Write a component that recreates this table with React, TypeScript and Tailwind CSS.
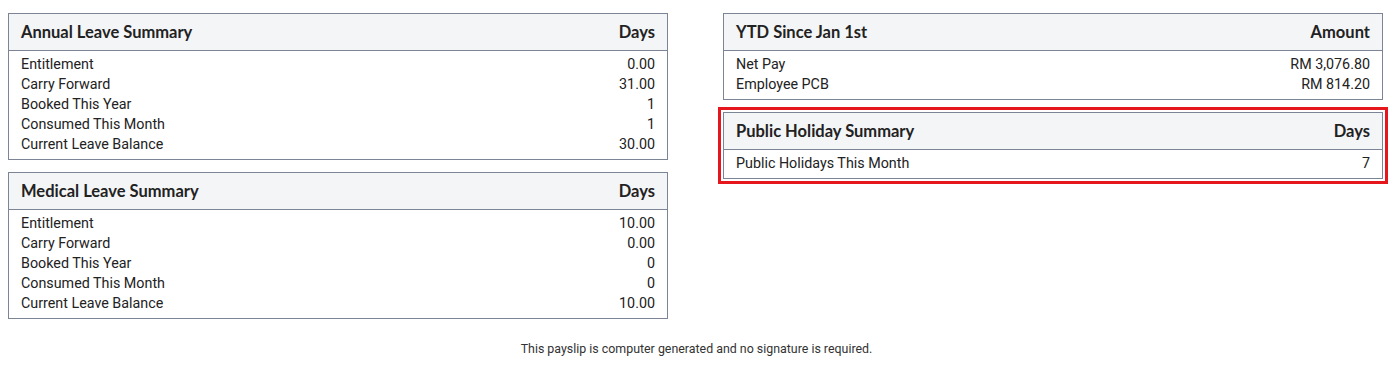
import React from "react";

type Row = [string, string];

function Summary({ title, unit, rows }: { title: string; unit: string; rows: Row[] }) {
  return (
    <div className="w-[660px] border border-[#7b8595] bg-white">
      <div className="flex h-[37px] items-center justify-between border-b border-[#7b8595] bg-[#f4f5f7] px-3 font-['Lato'] text-[16.5px] font-bold text-[#222]">
        <span>{title}</span>
        <span>{unit}</span>
      </div>
      <div className="px-3 pt-[3px] pb-[5px] font-['Roboto'] text-[14.3px] leading-[20px] text-[#222]">
        {rows.map(([k, v]) => (
          <div key={k} className="flex justify-between">
            <span>{k}</span>
            <span>{v}</span>
          </div>
        ))}
      </div>
    </div>
  );
}

export default function App() {
  return (
    <div className="w-[1393px] h-[368px] bg-white pt-[13px] font-['Roboto',sans-serif]">
      <div className="flex">
        <div className="ml-[8px] flex flex-col gap-3">
          <Summary
            title="Annual Leave Summary"
            unit="Days"
            rows={[
              ["Entitlement", "0.00"],
              ["Carry Forward", "31.00"],
              ["Booked This Year", "1"],
              ["Consumed This Month", "1"],
              ["Current Leave Balance", "30.00"],
            ]}
          />
          <Summary
            title="Medical Leave Summary"
            unit="Days"
            rows={[
              ["Entitlement", "10.00"],
              ["Carry Forward", "0.00"],
              ["Booked This Year", "0"],
              ["Consumed This Month", "0"],
              ["Current Leave Balance", "10.00"],
            ]}
          />
        </div>
        <div className="ml-[55px] flex flex-col gap-3">
          <Summary
            title="YTD Since Jan 1st"
            unit="Amount"
            rows={[
              ["Net Pay", "RM 3,076.80"],
              ["Employee PCB", "RM 814.20"],
            ]}
          />
          <div className="outline-[3px] outline-solid outline-offset-2 outline-[#e5161c]">
            <Summary title="Public Holiday Summary" unit="Days" rows={[["Public Holidays This Month", "7"]]} />
          </div>
        </div>
      </div>
      <div className="mt-[22px] text-center font-['Roboto'] text-[12.4px] leading-[16px] text-[#333]">
        This payslip is computer generated and no signature is required.
      </div>
    </div>
  );
}
